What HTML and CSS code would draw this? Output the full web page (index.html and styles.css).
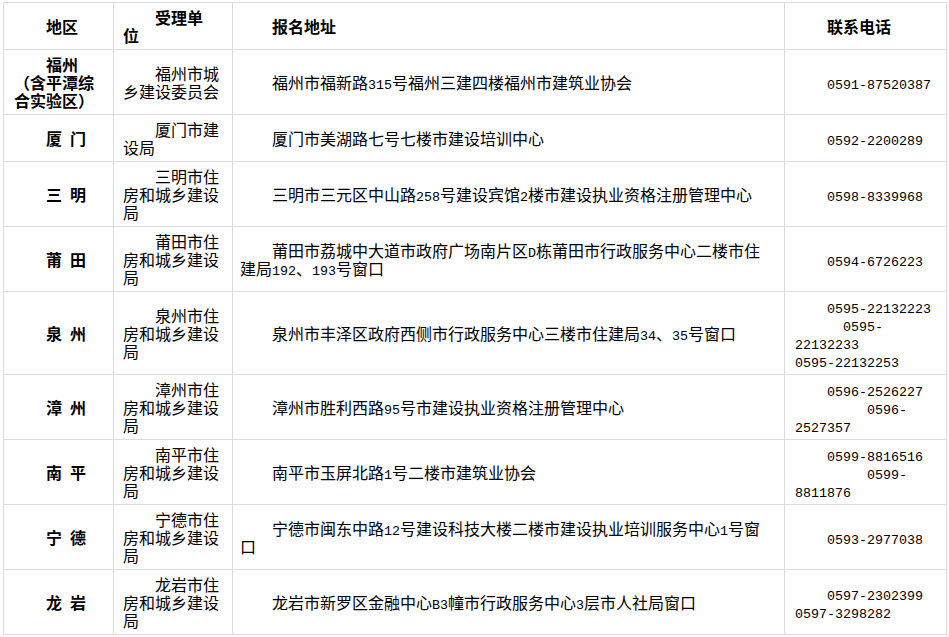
FILE: index.html
```html
<!DOCTYPE html>
<html lang="zh-CN">
<head>
<meta charset="utf-8">
<title>报名地址</title>
<link rel="stylesheet" href="styles.css">
</head>
<body>
<table class="tbl">
  <thead>
    <tr>
      <th class="c1">地区</th>
      <th class="c2">受理单<br>位</th>
      <th class="c3">报名地址</th>
      <th class="c4">联系电话</th>
    </tr>
  </thead>
  <tbody>
    <tr>
      <td class="c1 b">福州<br>（含平潭综<br>合实验区）</td>
      <td class="c2">福州市城<br>乡建设委员会</td>
      <td class="c3">福州市福新路<span class="n">315</span>号福州三建四楼福州市建筑业协会</td>
      <td class="c4"><span class="n">0591-87520387</span></td>
    </tr>
    <tr>
      <td class="c1 b">厦&ensp;门</td>
      <td class="c2">厦门市建<br>设局</td>
      <td class="c3">厦门市美湖路七号七楼市建设培训中心</td>
      <td class="c4"><span class="n">0592-2200289</span></td>
    </tr>
    <tr>
      <td class="c1 b">三&ensp;明</td>
      <td class="c2">三明市住<br>房和城乡建设<br>局</td>
      <td class="c3">三明市三元区中山路<span class="n">258</span>号建设宾馆<span class="n">2</span>楼市建设执业资格注册管理中心</td>
      <td class="c4"><span class="n">0598-8339968</span></td>
    </tr>
    <tr>
      <td class="c1 b">莆&ensp;田</td>
      <td class="c2">莆田市住<br>房和城乡建设<br>局</td>
      <td class="c3">莆田市荔城中大道市政府广场南片区<span class="n">D</span>栋莆田市行政服务中心二楼市住<br>建局<span class="n">192</span>、<span class="n">193</span>号窗口</td>
      <td class="c4"><span class="n">0594-6726223</span></td>
    </tr>
    <tr>
      <td class="c1 b">泉&ensp;州</td>
      <td class="c2">泉州市住<br>房和城乡建设<br>局</td>
      <td class="c3">泉州市丰泽区政府西侧市行政服务中心三楼市住建局<span class="n">34</span>、<span class="n">35</span>号窗口</td>
      <td class="c4"><span class="n">0595-22132223</span><br><span class="n sp6">0595-</span><br><span class="n">22132233</span><br><span class="n">0595-22132253</span></td>
    </tr>
    <tr>
      <td class="c1 b">漳&ensp;州</td>
      <td class="c2">漳州市住<br>房和城乡建设<br>局</td>
      <td class="c3">漳州市胜利西路<span class="n">95</span>号市建设执业资格注册管理中心</td>
      <td class="c4"><span class="n">0596-2526227</span><br><span class="n sp9">0596-</span><br><span class="n">2527357</span></td>
    </tr>
    <tr>
      <td class="c1 b">南&ensp;平</td>
      <td class="c2">南平市住<br>房和城乡建设<br>局</td>
      <td class="c3">南平市玉屏北路<span class="n">1</span>号二楼市建筑业协会</td>
      <td class="c4"><span class="n">0599-8816516</span><br><span class="n sp9">0599-</span><br><span class="n">8811876</span></td>
    </tr>
    <tr>
      <td class="c1 b">宁&ensp;德</td>
      <td class="c2">宁德市住<br>房和城乡建设<br>局</td>
      <td class="c3">宁德市闽东中路<span class="n">12</span>号建设科技大楼二楼市建设执业培训服务中心<span class="n">1</span>号窗<br>口</td>
      <td class="c4"><span class="n">0593-2977038</span></td>
    </tr>
    <tr>
      <td class="c1 b">龙&ensp;岩</td>
      <td class="c2">龙岩市住<br>房和城乡建设<br>局</td>
      <td class="c3">龙岩市新罗区金融中心<span class="n">B3</span>幢市行政服务中心<span class="n">3</span>层市人社局窗口</td>
      <td class="c4"><span class="n">0597-2302399</span><br><span class="n">0597-3298282</span></td>
    </tr>
  </tbody>
</table>
</body>
</html>
```

FILE: styles.css
```css
html, body {
  margin: 0;
  padding: 0;
  background: #ffffff;
}

body {
  font-family: "Noto Sans CJK SC", "Noto Sans CJK TC", sans-serif;
  font-size: 16px;
  color: #000000;
}

.tbl {
  margin: 2px 0 0 3px;
  width: 944px;
  table-layout: fixed;
  border-collapse: separate;
  border-spacing: 0;
  border-top: 1px solid #dcdcdc;
  border-left: 1px solid #dcdcdc;
}

.tbl th,
.tbl td {
  box-sizing: border-box;
  border-right: 1px solid #dcdcdc;
  border-bottom: 1px solid #dcdcdc;
  padding: 5px 10px;
  line-height: 18px;
  text-align: left;
  text-indent: 2em;
  vertical-align: middle;
  white-space: nowrap;
  font-weight: normal;
}

.tbl th {
  font-weight: bold;
}

.tbl .b {
  font-weight: bold;
}

.tbl .c1 {
  width: 110px;
  padding-left: 10px;
  padding-right: 10px;
}

.tbl .c2 {
  width: 119px;
  padding-left: 9px;
  padding-right: 10px;
}

.tbl .c3 {
  width: 552px;
  padding-left: 7px;
  padding-right: 16px;
}

.tbl .c4 {
  width: 162px;
  padding-left: 10px;
  padding-right: 10px;
}

.n {
  font-family: "Liberation Mono", "DejaVu Sans Mono", monospace;
  font-size: 13.33px;
  line-height: 0;
}

.sp6 {
  margin-left: 48px;
}

.sp9 {
  margin-left: 72px;
}
```
